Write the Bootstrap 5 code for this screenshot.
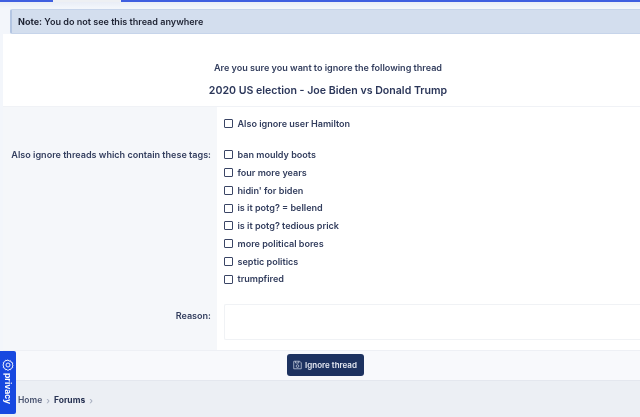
<!DOCTYPE html>
<html lang="en">
<head>
    <meta charset="UTF-8">
    <meta name="viewport" content="width=device-width, initial-scale=1.0">
    <title>Ignore thread</title>
    <link href="https://cdn.jsdelivr.net/npm/bootstrap@5.3.0/dist/css/bootstrap.min.css" rel="stylesheet">
    <style>
        html, body { height: 417px; overflow: hidden; }
        body {
            font-family: Inter, "Liberation Sans", sans-serif;
            font-size: 9.05px;
            font-weight: 600;
            color: #333e5e;
            background-color: #f3f6fb;
            filter: blur(0.4px);
        }
        .top-line { height: 9px; background: linear-gradient(#3f5fe0 0, #3f5fe0 1.5px, #e9edf6 2px, #f3f6fb 8px); }
        .top-tab { width: 68px; height: 2px; margin-left: 53px; background: #eef0f3; }
        .note-box {
            height: 25px;
            margin-left: 10px;
            padding-left: 6px;
            background: #d3deee;
            border: 1px solid #c6d4ea;
            border-left: 2px solid #b3c5e2;
            border-right: 0;
            border-radius: 2px 0 0 2px;
            color: #1d2232;
        }
        .note-box b { font-weight: 700; }
        .form-wrap { margin-left: 3px; width: 650px; }
        .intro-block { height: 73px; background: #fff; padding-top: 28px; border-bottom: 1px solid #f0f2f6; }
        .intro-block p { margin: 0 0 9px; line-height: 12px; }
        .intro-block h2 { margin: 0; font-size: 10.6px; line-height: 16px; font-weight: 600; color: #2b3659; }
        .label-col { width: 214px; background: #f5f7fa; padding-right: 6px; text-align: right; white-space: nowrap; }
        .field-col { background: #fff; padding: 8px 0 10px 6.5px; }
        .tag-label { margin-top: 42px; line-height: 12px; }
        .reason-label { margin-top: 149px; line-height: 12px; }
        .check-row { height: 17.8px; gap: 5px; }
        .check-row.first-row { margin-bottom: 13px; }
        .check-box { width: 9px; height: 9px; border: 1px solid #3a4565; border-radius: 1px; background: #fff; flex: none; }
        .reason-box { height: 36px; margin-top: 15.8px; margin-left: .5px; border: 1px solid #f0f2f5; border-right: 0; border-radius: 2px 0 0 2px; }
        .submit-bar { height: 31px; padding-right: 6px; background: #f8f9fc; border-top: 1px solid #eef0f5; border-bottom: 1px solid #e4e7ee; }
        .ignore-btn {
            height: 22px;
            width: 77px;
            padding: 0;
            gap: 3px;
            font-size: 8px;
            font-weight: 600;
            color: #e6eaf3;
            background: #1d3260;
            border: 0;
            border-radius: 3px;
        }
        .crumb-bar { height: 36px; background: #eceff4; padding: 3px 0 0 18px; gap: 4px; color: #4a5470; font-size: 8.5px; }
        .crumb-bar b { color: #283353; font-weight: 700; }
        .crumb-sep { color: #a9b0c0; font-size: 9px; }
        .privacy-tab {
            position: fixed;
            left: 0;
            top: 351px;
            width: 16px;
            height: 63px;
            background: #1748e0;
            border-radius: 0 2px 2px 0;
            color: #fff;
            padding-top: 8px;
            gap: 2px;
        }
        .privacy-tab span { writing-mode: vertical-rl; font-size: 8.5px; font-weight: 700; line-height: 16px; }
    </style>
</head>
<body>
    <div class="top-line"><div class="top-tab"></div></div>
    <div class="note-box d-flex align-items-center"><span><b>Note:</b> You do not see this thread anywhere</span></div>

    <div class="form-wrap">
        <div class="intro-block text-center">
            <p>Are you sure you want to ignore the following thread</p>
            <h2>2020 US election - Joe Biden vs Donald Trump</h2>
        </div>

        <div class="d-flex">
            <div class="label-col flex-shrink-0">
                <div class="tag-label">Also ignore threads which contain these tags:</div>
                <div class="reason-label">Reason:</div>
            </div>
            <div class="field-col flex-grow-1">
                <div class="check-row first-row d-flex align-items-center"><span class="check-box"></span>Also ignore user Hamilton</div>
                <div class="check-row d-flex align-items-center"><span class="check-box"></span>ban mouldy boots</div>
                <div class="check-row d-flex align-items-center"><span class="check-box"></span>four more years</div>
                <div class="check-row d-flex align-items-center"><span class="check-box"></span>hidin' for biden</div>
                <div class="check-row d-flex align-items-center"><span class="check-box"></span>is it potg? = bellend</div>
                <div class="check-row d-flex align-items-center"><span class="check-box"></span>is it potg? tedious prick</div>
                <div class="check-row d-flex align-items-center"><span class="check-box"></span>more political bores</div>
                <div class="check-row d-flex align-items-center"><span class="check-box"></span>septic politics</div>
                <div class="check-row d-flex align-items-center"><span class="check-box"></span>trumpfired</div>
                <div class="reason-box"></div>
            </div>
        </div>

        <div class="submit-bar d-flex align-items-center justify-content-center">
            <button type="button" class="btn ignore-btn d-flex align-items-center justify-content-center">
                <svg width="9" height="10" viewBox="0 0 10 10" fill="none" stroke="#cfd6e6" stroke-width="0.8">
                    <path d="M1 .8h6.4L9.2 2.6V9.2H.8V1z"/>
                    <path d="M2.8 .8v2h3.6v-2"/>
                    <circle cx="5" cy="6.2" r="1.5"/>
                </svg>
                Ignore thread
            </button>
        </div>
    </div>

    <div class="crumb-bar d-flex align-items-center">
        <span>Home</span>
        <span class="crumb-sep">›</span>
        <b>Forums</b>
        <span class="crumb-sep">›</span>
    </div>

    <div class="privacy-tab d-flex flex-column align-items-center">
        <svg width="12" height="12" viewBox="0 0 12 12" fill="none" stroke="#fff" stroke-width="0.9">
            <path d="M6 .8l1 1.3 1.6-.3.6 1.5 1.5.6-.3 1.6L11.2 6l-.8 1 .3 1.6-1.5.6-.6 1.5-1.6-.3-1 1.3-1-1.3-1.6.3-.6-1.5-1.5-.6.3-1.6L.8 6l.8-1-.3-1.6 1.5-.6.6-1.5 1.6.3z"/>
            <circle cx="6" cy="6" r="2"/>
        </svg>
        <span>privacy</span>
    </div>

    <script src="https://cdn.jsdelivr.net/npm/bootstrap@5.3.0/dist/js/bootstrap.bundle.min.js"></script>
</body>
</html>
